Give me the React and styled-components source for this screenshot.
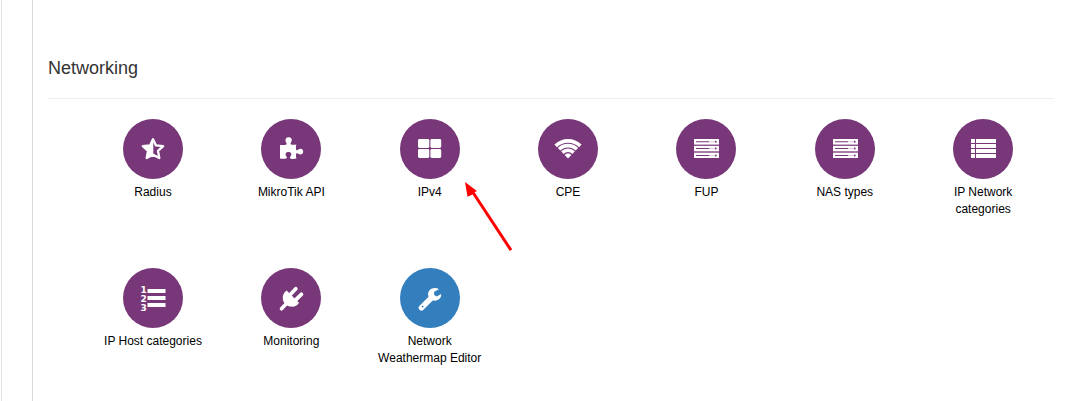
import React from "react";
import styled, { createGlobalStyle } from "styled-components";

const GlobalStyle = createGlobalStyle`
  * { box-sizing: border-box; }
  body {
    margin: 0;
    background: #fff;
    color: #000;
    font-family: "Liberation Sans", Arial, sans-serif;
    overflow: hidden;
  }
`;

const Page = styled.div`
  display: flex;
  height: 401px;
  padding-left: 1px;
`;

const Gutter = styled.aside`
  width: 31px;
  border-left: 1px solid #e6e6e6;
`;

const Panel = styled.main`
  position: relative;
  flex: 1;
  padding: 55px 14px 0 15px;
  border-left: 1px solid #d9d9d9;
`;

const Heading = styled.h4`
  margin: 0;
  height: 44px;
  border-bottom: 1px solid #eee;
  color: #333;
  font-size: 18px;
  font-weight: 400;
  line-height: 26px;
`;

const ModuleGrid = styled.div`
  display: grid;
  grid-template-columns: repeat(7, 138.36px);
  grid-auto-rows: 149px;
  padding: 20px 0 0 35.8px;
`;

const Module = styled.a`
  display: flex;
  flex-direction: column;
  align-items: center;
`;

const Disc = styled.span`
  display: block;
  width: 60px;
  height: 60px;
  border-radius: 50%;
  background: ${({ $color }) => $color};

  svg {
    display: block;
    width: 60px;
    height: 60px;
    fill: #fff;
  }
`;

const Label = styled.span`
  width: 112px;
  margin-top: 5px;
  font-size: 12px;
  line-height: 17px;
  text-align: center;
`;

const Pointer = styled.svg`
  position: absolute;
  left: 427px;
  top: 177px;
  width: 60px;
  height: 80px;
`;

const purple = "#783778";
const blue = "#337ebd";

const StarHalf = () => (
  <svg viewBox="0 0 60 60">
    <path d="M30 20.2 L33 26.4 L40.2 27.2 L35 31.9 L36.3 39 L30 35.7 L23.7 39 L25 31.9 L19.8 27.2 L27 26.4Z" fill="none" stroke="#fff" strokeWidth="2.3" strokeLinejoin="round" />
    <path d="M30.3 20 V35.8 L23.7 39 L25 31.9 L19.8 27.2 L27 26.4Z" />
  </svg>
);

const Puzzle = () => (
  <svg viewBox="0 0 60 60">
    <path d="M19 26 Q22.5 26.3 25 25.7 C26.3 25.2 25.6 24.2 25 23.2 C23.7 20.5 25 18.2 27.7 18.2 C30.5 18.2 31.6 20.6 30.2 23.1 C29.5 24.3 29.1 25.3 30.6 25.7 Q33 26.1 35.3 25.5 Q34.7 28 35 29.9 C35.2 31.7 36.3 31.3 37.4 30.5 C39.8 29 42.2 30.3 42.2 32.6 C42.2 35.2 39.7 36.4 37.4 34.8 C36 33.9 35 34 35 36 Q34.9 37.6 35.4 39.4 Q32.7 40.2 29.8 39.7 C28.6 39.4 28.8 38.2 29.7 37 C31.2 34.9 29.8 33 27.5 33 C25 33 23.8 35 25.1 37 C26 38.4 26.2 39.4 25 39.6 Q22 40 19 39.5Z" />
  </svg>
);

const FourSquares = () => (
  <svg viewBox="0 0 60 60">
    <rect x="18" y="20" width="11.3" height="8.9" rx="1.4" />
    <rect x="30.4" y="20" width="10.8" height="8.9" rx="1.4" />
    <rect x="18" y="30.1" width="11.3" height="8.9" rx="1.4" />
    <rect x="30.4" y="30.1" width="10.8" height="8.9" rx="1.4" />
  </svg>
);

const Wifi = () => (
  <svg viewBox="0 0 60 60">
    <g fill="none" stroke="#fff" strokeWidth="3.6">
      <path d="M17.7 26.9 A17.5 17.5 0 0 1 42.3 26.9" />
      <path d="M21.1 30.3 A12.7 12.7 0 0 1 38.9 30.3" />
      <path d="M24.4 33.6 A8 8 0 0 1 35.6 33.6" />
    </g>
    <path d="M26.6 35.9 Q30 32.8 33.4 35.9 L30 39.4Z" />
  </svg>
);

const Server = () => (
  <svg viewBox="0 0 60 60">
    <rect x="18" y="20" width="25" height="19" opacity=".35" />
    <path d="M18 25.6h25v.9H18z" fill={purple} />
    <rect x="18" y="20" width="25" height="5.4" rx=".4" />
    <rect x="18" y="27" width="25" height="5" rx=".4" />
    <rect x="18" y="34" width="25" height="5" rx=".4" />
    <g fill={purple}>
      <path d="M20 22.2h13v1H20zM20 29h13v1H20zM20 36h13v1H20z" />
      <path d="M33 22.2h5v1h-5zM33 29h5v1h-5zM33 36h5v1h-5z" opacity=".25" />
      <circle cx="39.7" cy="22.7" r="1" />
      <circle cx="39.7" cy="29.5" r="1" />
      <circle cx="39.7" cy="36.5" r="1" />
    </g>
  </svg>
);

const ListRows = () => (
  <svg viewBox="0 0 60 60">
    <path d="M18 20h4v4h-4zM23 20h20v4H23zM18 25h4v4h-4zM23 25h20v4H23zM18 30h4v4h-4zM23 30h20v4H23zM18 35h4v4h-4zM23 35h20v4H23z" />
  </svg>
);

const NumberedList = () => (
  <svg viewBox="0 0 60 60">
    <g fontFamily="DejaVu Sans, sans-serif" fontSize="9" fontWeight="700" textAnchor="middle">
      <text x="20.6" y="25.4">1</text>
      <text x="20.6" y="34">2</text>
      <text x="20.6" y="42.6">3</text>
    </g>
    <path d="M24.5 21.1h18v3.9h-18zM24.5 28.1h18v3.8h-18zM24.5 35.1h18v3.8h-18z" />
  </svg>
);

const Plug = () => (
  <svg viewBox="0 0 60 60">
    <g fill="none" stroke="#fff" strokeLinecap="round">
      <path d="M29.6 26.2 L34.8 20.8 M34.7 31.9 L40.4 26.3" strokeWidth="3.8" />
      <path d="M20.5 40.8 L26 35" strokeWidth="3.6" />
    </g>
    <path d="M25.6 22.4 L38 34.8 C36.2 38.2 32.7 39.2 29.6 38.6 C27.9 38.4 26.6 37.8 25 36.7 C23 34.9 22 33.2 21.8 30.8 C21.4 27.4 22.7 24.4 25.6 22.4Z" />
  </svg>
);

const Wrench = () => (
  <svg viewBox="0 0 60 60">
    <path d="M31.8 29.6 L21.5 39.7" stroke="#fff" strokeWidth="5.6" strokeLinecap="round" />
    <path d="M38.9 21.2 L34.2 23.8 V27 L36.8 28.5 L41.1 26.1 C41.8 29.7 38.5 32.7 34.9 32.7 C31 32.7 28.1 29.8 28.1 26.3 C28.1 22.7 31 19.9 34.8 19.9 Q37.3 19.9 38.9 21.2Z" />
    <circle cx="22.6" cy="38.6" r=".9" fill={blue} />
  </svg>
);

const modules = [
  { label: "Radius", Icon: StarHalf },
  { label: "MikroTik API", Icon: Puzzle },
  { label: "IPv4", Icon: FourSquares },
  { label: "CPE", Icon: Wifi },
  { label: "FUP", Icon: Server },
  { label: "NAS types", Icon: Server },
  { label: "IP Network categories", Icon: ListRows },
  { label: "IP Host categories", Icon: NumberedList },
  { label: "Monitoring", Icon: Plug },
  { label: "Network Weathermap Editor", Icon: Wrench, color: blue },
];

export default function App() {
  return (
    <>
      <GlobalStyle />
      <Page>
        <Gutter />
        <Panel>
          <Heading>Networking</Heading>
          <ModuleGrid>
            {modules.map(({ label, Icon, color = purple }) => (
              <Module key={label}>
                <Disc $color={color}>
                  <Icon />
                </Disc>
                <Label>{label}</Label>
              </Module>
            ))}
          </ModuleGrid>
          <Pointer viewBox="0 0 60 80">
            <path d="M12 14 L51 73.2" stroke="#fe0000" strokeWidth="3" />
            <path d="M5 5 L16.9 14.1 L13.2 16 L12.6 17.4 L7.5 19.7Z" fill="#fe0000" />
          </Pointer>
        </Panel>
      </Page>
    </>
  );
}
